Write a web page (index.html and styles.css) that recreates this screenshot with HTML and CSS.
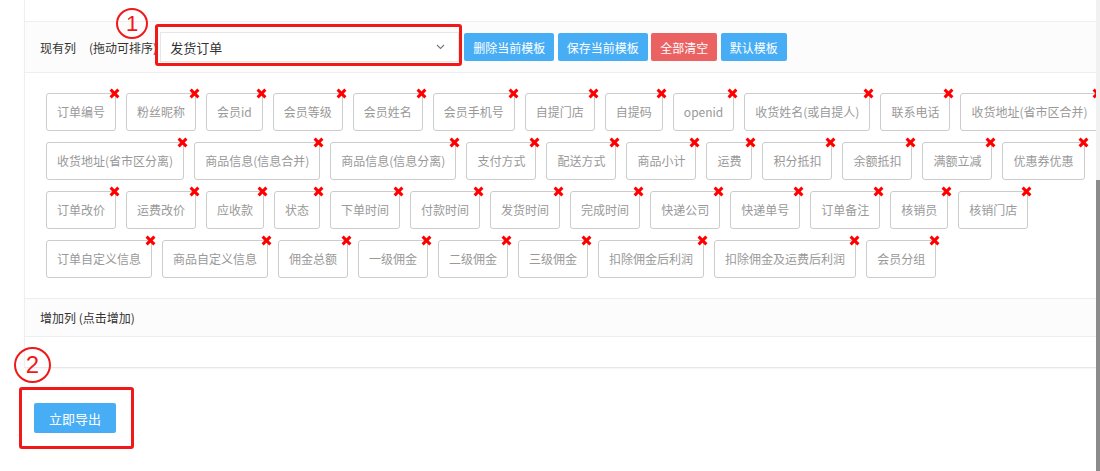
FILE: index.html
```html
<!DOCTYPE html>
<html lang="zh-CN">
<head>
    <meta charset="UTF-8">
    <meta name="viewport" content="width=device-width, initial-scale=1.0">
    <title>订单导出</title>
    <link rel="stylesheet" href="styles.css">
</head>
<body>
    <div class="export-panel">
        <div class="panel-top"></div>

        <!-- 现有列 -->
        <div class="panel-head">
            <span class="head-label">现有列<span class="head-hint">(拖动可排序)</span></span>
            <div class="tpl-select">
                <span>发货订单</span>
                <svg class="select-arrow" width="9" height="6" viewBox="0 0 9 6"><path d="M1 1L4.5 4.5L8 1" stroke="#777" stroke-width="1.1" fill="none"/></svg>
            </div>
            <button class="btn btn-blue">删除当前模板</button>
            <button class="btn btn-blue">保存当前模板</button>
            <button class="btn btn-red">全部清空</button>
            <button class="btn btn-blue">默认模板</button>
        </div>

        <div class="col-list">
            <div class="col-row">
                <span class="col-tag">订单编号<i class="del"></i></span>
                <span class="col-tag">粉丝昵称<i class="del"></i></span>
                <span class="col-tag">会员id<i class="del"></i></span>
                <span class="col-tag">会员等级<i class="del"></i></span>
                <span class="col-tag">会员姓名<i class="del"></i></span>
                <span class="col-tag">会员手机号<i class="del"></i></span>
                <span class="col-tag">自提门店<i class="del"></i></span>
                <span class="col-tag">自提码<i class="del"></i></span>
                <span class="col-tag">openid<i class="del"></i></span>
                <span class="col-tag">收货姓名(或自提人)<i class="del"></i></span>
                <span class="col-tag">联系电话<i class="del"></i></span>
                <span class="col-tag">收货地址(省市区合并)<i class="del"></i></span>
            </div>
            <div class="col-row">
                <span class="col-tag">收货地址(省市区分离)<i class="del"></i></span>
                <span class="col-tag">商品信息(信息合并)<i class="del"></i></span>
                <span class="col-tag">商品信息(信息分离)<i class="del"></i></span>
                <span class="col-tag">支付方式<i class="del"></i></span>
                <span class="col-tag">配送方式<i class="del"></i></span>
                <span class="col-tag">商品小计<i class="del"></i></span>
                <span class="col-tag">运费<i class="del"></i></span>
                <span class="col-tag">积分抵扣<i class="del"></i></span>
                <span class="col-tag">余额抵扣<i class="del"></i></span>
                <span class="col-tag">满额立减<i class="del"></i></span>
                <span class="col-tag">优惠券优惠<i class="del"></i></span>
            </div>
            <div class="col-row">
                <span class="col-tag">订单改价<i class="del"></i></span>
                <span class="col-tag">运费改价<i class="del"></i></span>
                <span class="col-tag">应收款<i class="del"></i></span>
                <span class="col-tag">状态<i class="del"></i></span>
                <span class="col-tag">下单时间<i class="del"></i></span>
                <span class="col-tag">付款时间<i class="del"></i></span>
                <span class="col-tag">发货时间<i class="del"></i></span>
                <span class="col-tag">完成时间<i class="del"></i></span>
                <span class="col-tag">快递公司<i class="del"></i></span>
                <span class="col-tag">快递单号<i class="del"></i></span>
                <span class="col-tag">订单备注<i class="del"></i></span>
                <span class="col-tag">核销员<i class="del"></i></span>
                <span class="col-tag">核销门店<i class="del"></i></span>
            </div>
            <div class="col-row">
                <span class="col-tag">订单自定义信息<i class="del"></i></span>
                <span class="col-tag">商品自定义信息<i class="del"></i></span>
                <span class="col-tag">佣金总额<i class="del"></i></span>
                <span class="col-tag">一级佣金<i class="del"></i></span>
                <span class="col-tag">二级佣金<i class="del"></i></span>
                <span class="col-tag">三级佣金<i class="del"></i></span>
                <span class="col-tag">扣除佣金后利润<i class="del"></i></span>
                <span class="col-tag">扣除佣金及运费后利润<i class="del"></i></span>
                <span class="col-tag">会员分组<i class="del"></i></span>
            </div>
        </div>

        <!-- 增加列 -->
        <div class="panel-head add-head">增加列 (点击增加)</div>
        <div class="add-list"></div>
    </div>

    <div class="export-bar">
        <button class="btn btn-export">立即导出</button>
    </div>

    <!-- 标注 -->
    <div class="mark-num mark-num-1">1</div>
    <div class="mark-box mark-box-1"></div>
    <div class="mark-num mark-num-2">2</div>
    <div class="mark-box mark-box-2"></div>

    <div class="fake-scroll"><div class="fake-thumb"></div></div>
</body>
</html>
```

FILE: styles.css
```css
body {
    margin: 0;
    font-family: "Noto Sans CJK SC", "Open Sans", sans-serif;
    font-size: 12px;
    color: #333;
    background: #fff;
    overflow: hidden;
}

.export-panel {
    margin-left: 24px;
    width: 1072px;
    border-left: 1px solid #eee;
    border-bottom: 1px solid #e8e8e8;
    box-shadow: 0 1px 1px rgba(0, 0, 0, 0.03);
}

.panel-top {
    height: 21px;
    border-bottom: 1px solid #eee;
}

.panel-head {
    display: flex;
    align-items: center;
    height: 50px;
    padding-left: 15px;
    background: #fcfcfc;
    border-bottom: 1px solid #eee;
}

.head-label {
    color: #333;
    margin-right: 3px;
}

.head-hint {
    margin-left: 13px;
}

.tpl-select {
    display: flex;
    align-items: center;
    justify-content: space-between;
    box-sizing: border-box;
    width: 299px;
    height: 30px;
    padding: 0 13px 0 9px;
    background: #fff;
    border: 1px solid #e6e6e6;
    font-size: 13px;
    color: #333;
    margin-right: 5px;
}

.btn {
    border: none;
    border-radius: 2px;
    font-family: inherit;
    color: #fff;
    cursor: pointer;
}

.panel-head .btn {
    height: 28px;
    padding: 0 9px;
    font-size: 12px;
    margin-right: 3.5px;
}

.btn-blue {
    background: #47aef6;
}

.btn-red {
    background: #ea6262;
}

/* 列标签 */
.col-list {
    padding: 20px 0 20px 21px;
    border-bottom: 1px solid #eee;
    overflow: hidden;
}

.col-row {
    display: flex;
    flex-wrap: nowrap;
    gap: 10px;
    margin-bottom: 11px;
}

.col-row:last-child {
    margin-bottom: 0;
}

.col-tag {
    position: relative;
    flex: none;
    box-sizing: border-box;
    height: 38px;
    line-height: 36px;
    padding: 0 10px;
    border: 1px solid #ccc;
    border-radius: 3px;
    color: #999;
    font-size: 12px;
    white-space: nowrap;
    background: #fff;
}

.col-tag .del {
    position: absolute;
    top: -5px;
    right: -4px;
    width: 9px;
    height: 9px;
}

.col-tag .del::before,
.col-tag .del::after {
    content: "";
    position: absolute;
    left: -1px;
    top: 3px;
    width: 11px;
    height: 3px;
    background: #f00;
    transform: rotate(45deg);
}

.col-tag .del::after {
    transform: rotate(-45deg);
}

.add-head {
    height: 37px;
    color: #333;
}

.add-list {
    height: 30px;
}

/* 导出按钮 */
.export-bar {
    padding: 35px 0 0 34px;
}

.btn-export {
    width: 82px;
    height: 30px;
    font-size: 13px;
    background: #47aef6;
}

/* 标注 */
.mark-num {
    position: absolute;
    box-sizing: border-box;
    border: 2px solid #f01818;
    border-radius: 50%;
    color: #f01818;
    font-family: "Liberation Sans", sans-serif;
    text-align: center;
}

.mark-num-1 {
    left: 116px;
    top: 8px;
    width: 32px;
    height: 31px;
    font-size: 22px;
    line-height: 27px;
}

.mark-num-2 {
    left: 14px;
    top: 347px;
    width: 37px;
    height: 36px;
    font-size: 24px;
    line-height: 32px;
}

.mark-box {
    position: absolute;
    box-sizing: border-box;
    border: 3px solid #f01818;
    border-radius: 3px;
}

.mark-box-1 {
    left: 155px;
    top: 24px;
    width: 307px;
    height: 42px;
}

.mark-box-2 {
    left: 19px;
    top: 387px;
    width: 115px;
    height: 62px;
}

.fake-scroll {
    position: fixed;
    top: 0;
    right: 0;
    width: 4px;
    height: 100%;
    background: #f1f1f1;
}

.fake-thumb {
    margin-top: 180px;
    height: calc(100% - 180px);
    background: #8b8b8b;
}
```
